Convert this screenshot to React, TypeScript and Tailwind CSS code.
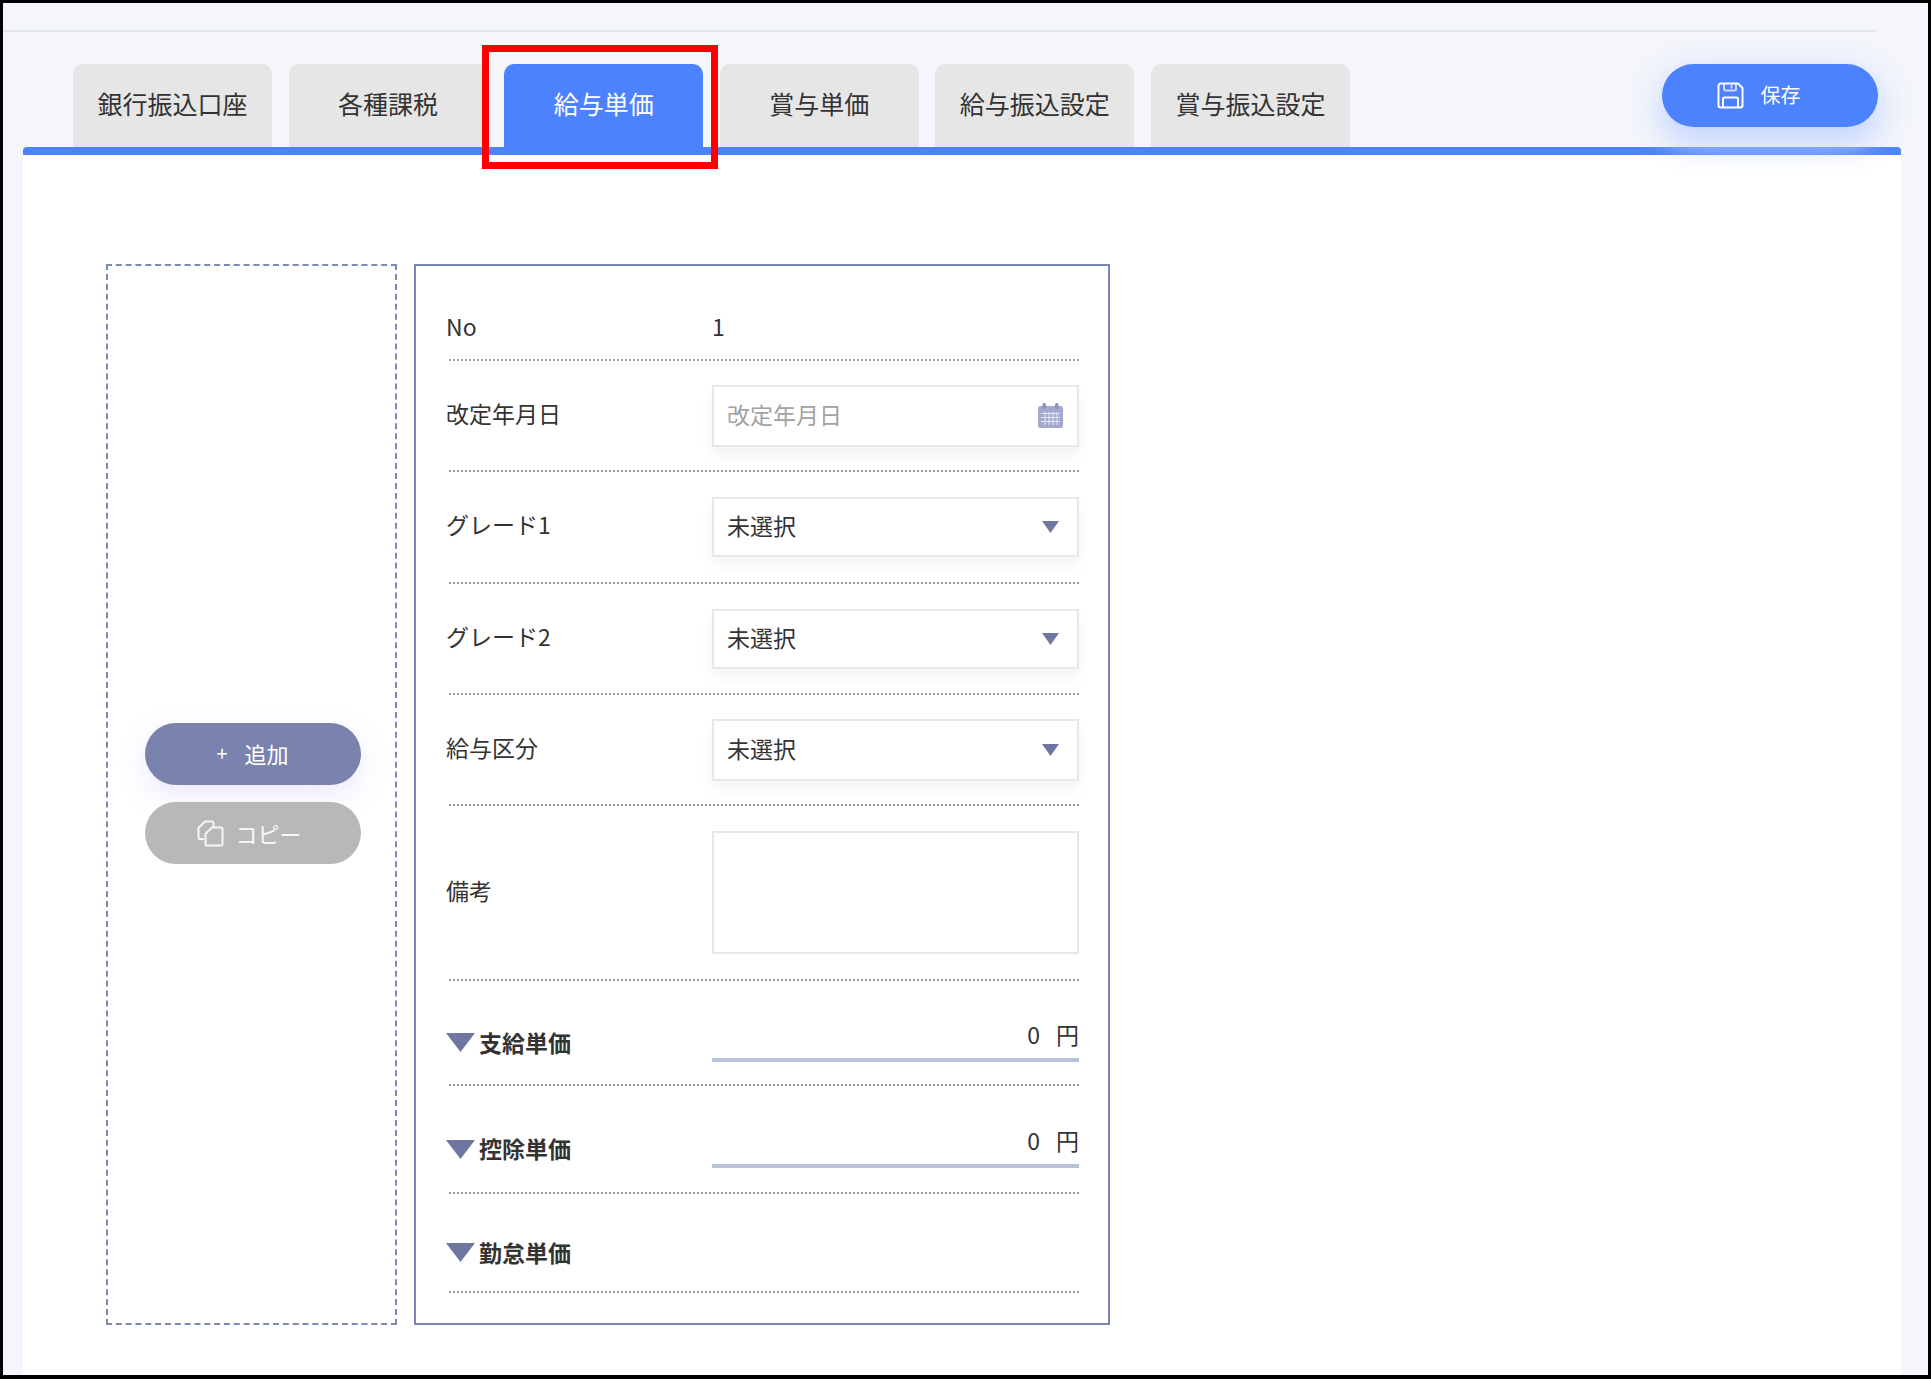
import type { ReactNode } from "react";

const tabs = ["銀行振込口座", "各種課税", "給与単価", "賞与単価", "給与振込設定", "賞与振込設定"];

function SaveIcon() {
  return (
    <svg width="27" height="27" viewBox="0 0 27 27" fill="none" stroke="white" strokeWidth="2">
      <path d="M3.500 1.500h17.500l4.500 4.500v17.500a2 2 0 0 1-2 2h-20a2 2 0 0 1-2-2v-20a2 2 0 0 1 2-2z" />
      <path d="M7 2v5a1.500 1.500 0 0 0 1.500 1.500h9A1.500 1.500 0 0 0 19 7V2" strokeOpacity="0.7" />
      <path d="M14.500 3v3.500" strokeOpacity="0.7" />
      <path d="M6 25v-8a1.500 1.500 0 0 1 1.500-1.500h12A1.500 1.500 0 0 1 21 17v8" />
    </svg>
  );
}

function CopyIcon() {
  return (
    <svg width="27" height="27" viewBox="0 0 27 27" fill="none" stroke="white" strokeWidth="2" strokeOpacity="0.85">
      <path d="M7 19H3a1.500 1.500 0 0 1-1.500-1.500V8L8 1.500h7a1.500 1.500 0 0 1 1.500 1.500v4" />
      <path d="M10 25.500a1.500 1.500 0 0 1-1.500-1.500V14L15 7.500h9a1.500 1.500 0 0 1 1.500 1.500v15a1.500 1.500 0 0 1-1.500 1.500z" />
    </svg>
  );
}

function CalendarIcon() {
  return (
    <svg width="25" height="25" viewBox="0 0 25 25">
      <rect x="0" y="3" width="25" height="22" rx="2.500" fill="#a4aace" />
      <rect x="4.500" y="0" width="3.500" height="6" rx="1.500" fill="#8c93bd" />
      <rect x="17" y="0" width="3.500" height="6" rx="1.500" fill="#8c93bd" />
      <path d="M3 10.500h19M3 14.500h19M3 18.500h19M7 9v13M11 9v13M15 9v13M19 9v13" stroke="#e4e6f2" strokeWidth="1" />
    </svg>
  );
}

function Caret({ large = false }: { large?: boolean }) {
  return large ? (
    <svg width="29" height="19" viewBox="0 0 29 19" className="shrink-0 translate-y-px">
      <path d="M0 0h29L14.500 19z" fill="#6f76a1" />
    </svg>
  ) : (
    <svg width="17" height="12" viewBox="0 0 17 12" className="shrink-0">
      <path d="M0 0h17L8.500 12z" fill="#6f76a1" />
    </svg>
  );
}

function Row({ height, className = "", children }: { height: string; className?: string; children: ReactNode }) {
  return (
    <div className={`flex items-center border-b-2 border-dotted border-[#9a9a9a] ${height} ${className}`}>{children}</div>
  );
}

function Label({ children }: { children: ReactNode }) {
  return <div className="-ml-[3px] w-[266px] shrink-0 -translate-y-[3px] text-[23px] leading-[30px] text-[#333]">{children}</div>;
}

function SelectBox({ height }: { height: string }) {
  return (
    <div className={`flex w-[367px] items-center justify-between border-2 border-[#e8e8e8] bg-white pl-[13px] pr-[18px] shadow-[0_8px_14px_rgba(0,0,0,0.05)] ${height}`}>
      <span className="-translate-y-[2px] text-[23px] leading-[30px] text-[#333]">未選択</span>
      <Caret />
    </div>
  );
}

function Section({ title }: { title: string }) {
  return (
    <div className="-ml-[3px] flex w-[266px] shrink-0 items-center gap-[4px]">
      <Caret large />
      <span className="text-[23px] font-bold leading-[30px] text-[#333]">{title}</span>
    </div>
  );
}

function Amount() {
  return (
    <div className="flex h-[43px] w-[367px] items-start justify-end gap-[16px] border-b-4 border-[#b8c0da] text-[23px] leading-[30px] text-[#333]">
      <span>0</span>
      <span>円</span>
    </div>
  );
}

export default function App() {
  return (
    <div className="relative flex h-[1379px] w-[1931px] flex-col border-x-[3px] border-b-4 border-t-[3px] border-black bg-[#f4f6fb] font-['Noto_Sans_CJK_JP',sans-serif]">
      <div className="h-[29px] w-[1873px] shrink-0 border-b-2 border-[#e1e5ee]" />

      <div className="mt-[32px] flex h-[83px] shrink-0 items-start justify-between pl-[70px] pr-[50px]">
        <div className="flex gap-[16.6px]">
          {tabs.map((t, i) => (
            <div
              key={t}
              className={
                i === 2
                  ? "flex h-[83px] w-[199px] items-center justify-center rounded-t-[10px] bg-[#4d82ff] pb-[3px] text-[25px] text-white"
                  : "flex h-[83px] w-[199px] items-center justify-center rounded-t-[10px] bg-[#e6e6e6] pb-[3px] text-[25px] text-[#333]"
              }
            >
              {t}
            </div>
          ))}
        </div>
        <button className="relative z-10 flex h-[63px] w-[216px] items-center justify-center gap-[17px] rounded-full bg-[#4d82ff] pb-[1px] pr-[23px] text-[20px] text-white shadow-[0_10px_36px_rgba(190,208,255,0.9),0_22px_26px_rgba(205,220,255,0.45)]">
          <SaveIcon />
          <span>保存</span>
        </button>
      </div>

      <div className="ml-[20px] mr-[27px] flex flex-1 items-start gap-[17px] rounded-t-[4px] border-t-8 border-[#4d82ff] bg-white pl-[83px] pt-[109px]">
        <div className="flex h-[1061px] w-[291px] shrink-0 flex-col items-center justify-center gap-[17px] border-2 border-dashed border-[#7f89b5] pb-[2px] pl-[2px]">
          <button className="flex h-[62px] w-[216px] items-center justify-center gap-[17px] rounded-full bg-[#7a83ae] pb-[2px] text-[22px] text-white shadow-[0_10px_30px_rgba(150,130,255,0.18)]">
            <span className="text-[20px]">+</span>
            <span>追加</span>
          </button>
          <button className="flex h-[62px] w-[216px] items-center justify-center gap-[11px] rounded-full bg-[#b8b8b8] pr-[6px] text-[22px] text-white/90">
            <CopyIcon />
            <span>コピー</span>
          </button>
        </div>

        <div className="h-[1061px] w-[696px] shrink-0 border-2 border-[#7b85b3] pl-[33px] pr-[29px]">
          <Row height="h-[95px]" className="pt-[28px]">
            <div className="-ml-[3px] w-[266px] shrink-0 -translate-y-px text-[23px] leading-[30px] text-[#333]">No</div>
            <span className="-translate-y-px text-[23px] leading-[30px] text-[#333]">1</span>
          </Row>
          <Row height="h-[111px]">
            <Label>改定年月日</Label>
            <div className="flex h-[62px] w-[367px] items-center justify-between border-2 border-[#e8e8e8] bg-white pl-[13px] pr-[14px] shadow-[0_8px_14px_rgba(0,0,0,0.05)]">
              <span className="-translate-y-[2px] text-[23px] leading-[30px] text-[#a2a2a2]">改定年月日</span>
              <CalendarIcon />
            </div>
          </Row>
          <Row height="h-[112px]">
            <Label>グレード1</Label>
            <SelectBox height="h-[60px]" />
          </Row>
          <Row height="h-[111px]">
            <Label>グレード2</Label>
            <SelectBox height="h-[60px]" />
          </Row>
          <Row height="h-[111px]">
            <Label>給与区分</Label>
            <SelectBox height="h-[62px]" />
          </Row>
          <Row height="h-[175px]">
            <Label>備考</Label>
            <div className="h-[123px] w-[367px] border-2 border-[#e8e8e8] bg-white" />
          </Row>
          <Row height="h-[105px]" className="pt-[16px]">
            <div className="w-[263px] shrink-0 translate-y-px">
              <Section title="支給単価" />
            </div>
            <Amount />
          </Row>
          <Row height="h-[108px]" className="pt-[14px]">
            <div className="w-[263px] shrink-0 translate-y-[2px]">
              <Section title="控除単価" />
            </div>
            <Amount />
          </Row>
          <Row height="h-[99px]" className="pt-[18px]">
            <Section title="勤怠単価" />
          </Row>
        </div>
      </div>

      <div className="pointer-events-none absolute left-[479px] top-[42px] z-20 h-[124px] w-[236px] border-[7px] border-[#ff0000]" />
    </div>
  );
}
